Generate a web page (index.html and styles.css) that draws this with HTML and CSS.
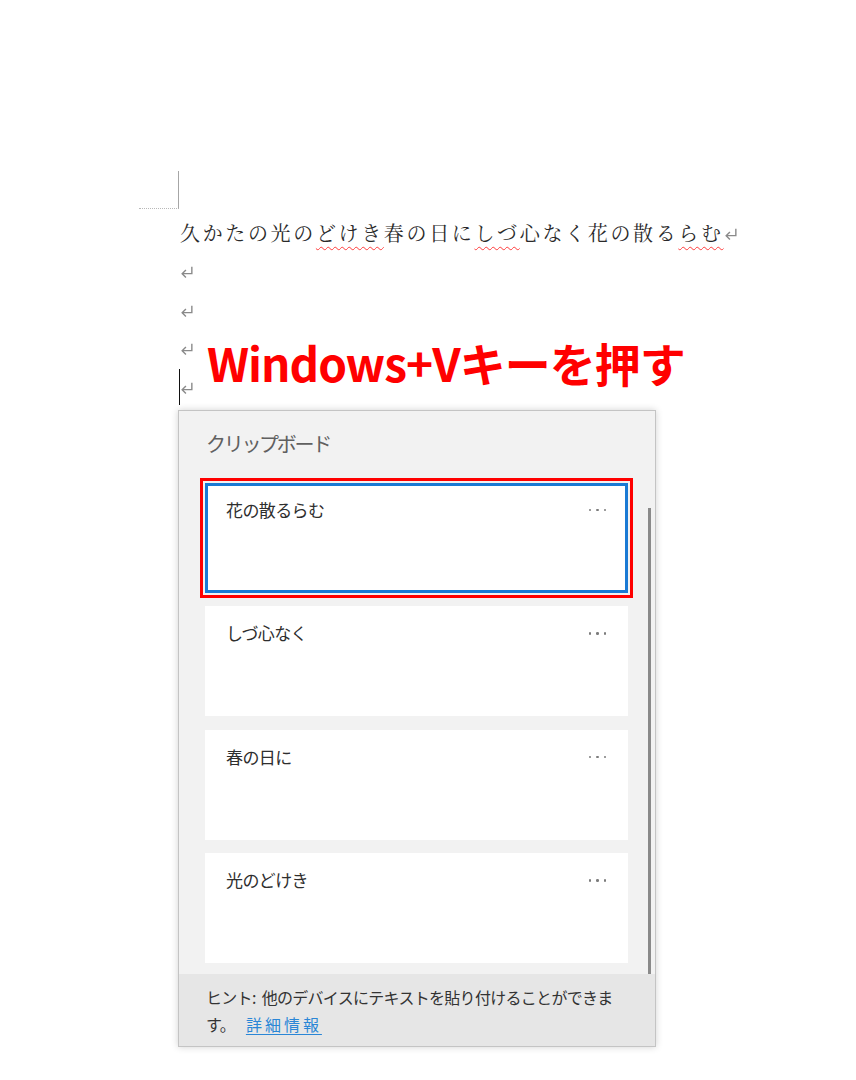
FILE: index.html
```html
<!DOCTYPE html>
<html lang="ja">
<head>
<meta charset="utf-8">
<link rel="stylesheet" href="styles.css">
</head>
<body>
<div class="page">
  <div class="corner"></div>
  <div class="doc">
    <div class="line">久かたの光の<span class="wave">どけき</span>春の日に<span class="wave">しづ</span>心なく花の散る<span class="wave">らむ</span><svg class="ret" viewBox="0 0 13 12" width="14" height="13"><path d="M11 1.5V8H2M5.5 4.5L2 8l3.5 3.5" /></svg></div>
    <div class="line"><svg class="ret" viewBox="0 0 13 12" width="14" height="13"><path d="M11 1.5V8H2M5.5 4.5L2 8l3.5 3.5" /></svg></div>
    <div class="line"><svg class="ret" viewBox="0 0 13 12" width="14" height="13"><path d="M11 1.5V8H2M5.5 4.5L2 8l3.5 3.5" /></svg></div>
    <div class="line"><svg class="ret" viewBox="0 0 13 12" width="14" height="13"><path d="M11 1.5V8H2M5.5 4.5L2 8l3.5 3.5" /></svg></div>
    <div class="line last"><span class="cursor"></span><svg class="ret" viewBox="0 0 13 12" width="14" height="13"><path d="M11 1.5V8H2M5.5 4.5L2 8l3.5 3.5" /></svg></div>
    <div class="note">Windows+Vキーを押す</div>
  </div>

  <div class="panel">
    <div class="title">クリップボード</div>
    <div class="body">
      <div class="list">
        <div class="card selected">
          <span class="ctext">花の散るらむ</span>
          <span class="dots"><i></i><i></i><i></i></span>
        </div>
        <div class="card">
          <span class="ctext">しづ心なく</span>
          <span class="dots"><i></i><i></i><i></i></span>
        </div>
        <div class="card">
          <span class="ctext">春の日に</span>
          <span class="dots"><i></i><i></i><i></i></span>
        </div>
        <div class="card">
          <span class="ctext">光のどけき</span>
          <span class="dots"><i></i><i></i><i></i></span>
        </div>
      </div>
      <div class="thumb"></div>
    </div>
    <div class="footer">ヒント:<span class="gap"> </span>他のデバイスにテキストを貼り付けることができま<br>す。 <a class="link" href="#">詳細情報</a></div>
  </div>
</div>
</body>
</html>
```

FILE: styles.css
```css
html, body {
  margin: 0;
  padding: 0;
  background: #ffffff;
}

.page {
  width: 856px;
  height: 1080px;
  padding-top: 171px;
  box-sizing: border-box;
  font-family: "Noto Sans CJK JP", "Noto Sans", sans-serif;
}

.corner {
  margin-left: 139px;
  width: 39px;
  height: 37px;
  border-right: 1px solid #a6a6a6;
  border-bottom: 1px dotted #b8b8b8;
}

.doc {
  position: relative;
  margin-top: 4px;
  padding-left: 180px;
}

.line {
  height: 38.5px;
  display: flex;
  align-items: center;
  font-family: "Noto Serif CJK JP", "Noto Sans CJK JP", serif;
  font-size: 20px;
  letter-spacing: 2.65px;
  color: #2a2a2a;
  white-space: nowrap;
}

.wave {
  text-decoration: underline wavy #ff3b3b;
  text-decoration-thickness: 1px;
  text-underline-offset: 5px;
}

.ret {
  display: block;
  flex: none;
  fill: none;
  stroke: #8a8a8a;
  stroke-width: 1.3;
  margin-top: 2px;
}

.last {
  position: relative;
}

.cursor {
  position: absolute;
  left: -1px;
  top: 2px;
  width: 1px;
  height: 36px;
  background: #111;
}

.note {
  position: absolute;
  left: 207px;
  top: 126px;
  font-family: "Noto Sans CJK JP", sans-serif;
  font-weight: 700;
  font-size: 46px;
  line-height: 1;
  letter-spacing: -1px;
  color: #ff0000;
  white-space: nowrap;
}

.panel {
  margin-top: 4px;
  margin-left: 178px;
  width: 478px;
  height: 637px;
  box-sizing: border-box;
  border: 1px solid #c4c4c4;
  background: #f2f2f2;
  box-shadow: 0 0 7px rgba(0, 0, 0, 0.18);
  display: flex;
  flex-direction: column;
}

.title {
  padding: 19px 0 25px 27px;
  font-size: 20px;
  line-height: 28px;
  letter-spacing: -2.3px;
  color: #606060;
}

.body {
  flex: 1;
  display: flex;
  min-height: 0;
}

.list {
  margin-left: 26px;
  width: 423px;
  display: flex;
  flex-direction: column;
  gap: 13.5px;
}

.card {
  height: 110px;
  box-sizing: border-box;
  background: #ffffff;
  padding: 15px 21px 0 21px;
  display: flex;
  justify-content: space-between;
  align-items: flex-start;
}

.card.selected {
  border: 3px solid #1a7ad4;
  padding: 12px 18px 0 18px;
  outline: 3px solid #ff0000;
  outline-offset: 2px;
}

.ctext {
  font-size: 17px;
  line-height: 24px;
  letter-spacing: -0.6px;
  color: #2e2e2e;
}

.dots {
  display: flex;
  gap: 5px;
  margin-top: 11px;
  margin-right: 1px;
}

.dots i {
  display: block;
  width: 2.5px;
  height: 2.5px;
  border-radius: 50%;
  background: #7c7c7c;
}

.thumb {
  margin-left: 20px;
  margin-top: 25px;
  width: 3px;
  background: #8a8a8a;
}

.footer {
  height: 72px;
  box-sizing: border-box;
  background: #e6e6e6;
  padding: 10px 0 0 27px;
  font-size: 16px;
  line-height: 27px;
  letter-spacing: -0.7px;
  color: #333333;
  white-space: nowrap;
}

.gap {
  display: inline-block;
  width: 6px;
}

.link {
  margin-left: 8px;
  color: #2a86d6;
  letter-spacing: 3px;
  text-decoration: underline;
  text-underline-offset: 3px;
}
```
